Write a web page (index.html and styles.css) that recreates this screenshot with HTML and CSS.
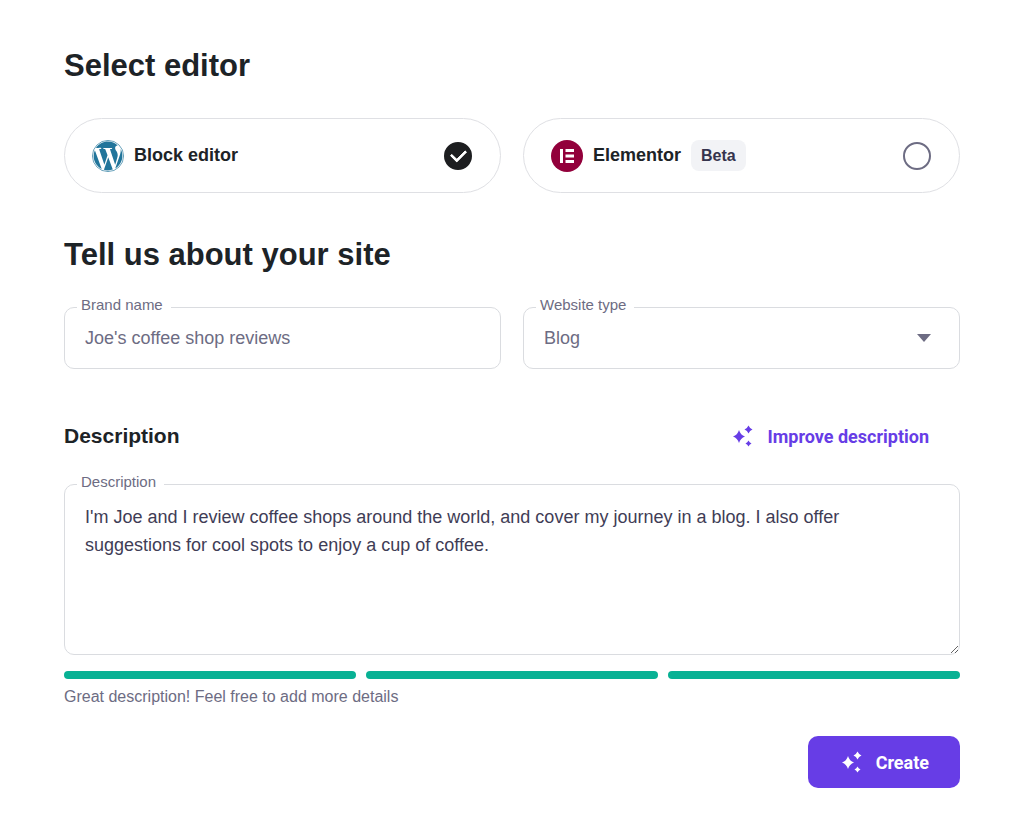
FILE: index.html
```
<!DOCTYPE html>
<html lang="en">
<head>
  <meta charset="UTF-8">
  <meta name="viewport" content="width=device-width, initial-scale=1.0">
  <title>Create your site</title>
  <link rel="stylesheet" href="styles.css">
</head>
<body>
  <form class="site-form">
    <h1 class="title">Select editor</h1>
    <div class="row editors">
      <label class="editor-card" for="editor-block">
        <svg class="editor-logo" viewBox="0 0 24 24" aria-hidden="true">
          <circle cx="12" cy="12" r="11.700" fill="#fff" stroke="#21759b" stroke-width=".5"/>
          <path fill="#21759b" d="M21.469 6.825c.84 1.537 1.318 3.3 1.318 5.175 0 3.979-2.156 7.456-5.363 9.325l3.295-9.527c.615-1.54.82-2.771.82-3.864 0-.405-.026-.78-.07-1.11m-7.981.105c.647-.03 1.232-.105 1.232-.105.582-.075.514-.93-.067-.899 0 0-1.755.135-2.88.135-1.064 0-2.85-.15-2.85-.15-.585-.03-.661.855-.075.885 0 0 .54.061 1.125.09l1.68 4.605-2.37 7.08L5.354 6.9c.649-.03 1.234-.1 1.234-.1.585-.075.516-.93-.065-.896 0 0-1.746.138-2.874.138-.2 0-.438-.008-.69-.015C4.911 3.15 8.235 1.215 12 1.215c2.809 0 5.365 1.072 7.286 2.833-.046-.003-.091-.009-.141-.009-1.06 0-1.812.923-1.812 1.914 0 .89.513 1.643 1.06 2.531.411.72.89 1.643.89 2.977 0 .915-.354 1.994-.821 3.479l-1.075 3.585-3.9-11.61.001.014zM12 22.784c-1.059 0-2.081-.153-3.048-.437l3.237-9.406 3.315 9.087c.024.053.05.101.078.149-1.12.393-2.325.607-3.582.607M1.211 12c0-1.564.336-3.05.935-4.39L7.29 21.709C3.694 19.96 1.212 16.271 1.211 12"/>
        </svg>
        <span class="editor-name">Block editor</span>
        <input class="editor-radio" type="radio" id="editor-block" name="editor" value="block" checked>
      </label>
      <label class="editor-card" for="editor-elementor">
        <svg class="editor-logo" viewBox="0 0 32 32" aria-hidden="true">
          <circle cx="16" cy="16" r="16" fill="#92003b"/>
          <path fill="#fff" d="M9 9h3v14H9zM14.500 9H23v3h-8.500zM14.500 14.500H23v3h-8.500zM14.500 20H23v3h-8.500z"/>
        </svg>
        <span class="editor-name">Elementor</span>
        <span class="badge">Beta</span>
        <input class="editor-radio" type="radio" id="editor-elementor" name="editor" value="elementor">
      </label>
    </div>

    <h2 class="title">Tell us about your site</h2>
    <div class="row">
      <div class="field">
        <label for="brand">Brand name</label>
        <input type="text" id="brand" name="brand" value="Joe's coffee shop reviews">
      </div>
      <div class="field">
        <label for="type">Website type</label>
        <select id="type" name="type">
          <option>Blog</option>
        </select>
        <svg class="arrow" viewBox="0 0 16 8" aria-hidden="true"><path d="M1 0h14L8 8z"/></svg>
      </div>
    </div>

    <div class="description-header">
      <h3>Description</h3>
      <button type="button" class="btn-link">
        <svg class="sparkles" viewBox="0 0 20 22" aria-hidden="true">
          <path d="M6 5Q7.500 10 12 11.500Q7.500 13 6 18Q4.500 13 0 11.500Q4.500 10 6 5zM15.500 0.500Q16.700 3.300 19.500 4.500Q16.700 5.700 15.500 8.500Q14.300 5.700 11.500 4.500Q14.300 3.300 15.500 0.500zM15.500 15.500Q16.400 17.600 18.500 18.500Q16.400 19.400 15.500 21.500Q14.600 19.400 12.500 18.500Q14.600 17.600 15.500 15.500z"/>
        </svg>
        Improve description
      </button>
    </div>
    <div class="field">
      <label for="description">Description</label>
      <textarea id="description" name="description" spellcheck="false">I'm Joe and I review coffee shops around the world, and cover my journey in a blog. I also offer suggestions for cool spots to enjoy a cup of coffee.</textarea>
    </div>
    <div class="strength">
      <span></span>
      <span></span>
      <span></span>
    </div>
    <p class="hint">Great description! Feel free to add more details</p>

    <div class="actions">
      <button type="submit" class="btn-primary">
        <svg class="sparkles" viewBox="0 0 20 22" aria-hidden="true">
          <path d="M6 5Q7.500 10 12 11.500Q7.500 13 6 18Q4.500 13 0 11.500Q4.500 10 6 5zM15.500 0.500Q16.700 3.300 19.500 4.500Q16.700 5.700 15.500 8.500Q14.300 5.700 11.500 4.500Q14.300 3.300 15.500 0.500zM15.500 15.500Q16.400 17.600 18.500 18.500Q16.400 19.400 15.500 21.500Q14.600 19.400 12.500 18.500Q14.600 17.600 15.500 15.500z"/>
        </svg>
        Create
      </button>
    </div>
  </form>
</body>
</html>
```
FILE: styles.css
```
* {
  box-sizing: border-box;
}

body {
  margin: 0;
  background: #fff;
  color: #1d2327;
  font-family: "Liberation Sans", Arial, sans-serif;
}

.site-form {
  padding: 46px 64px 38px;
}

.title {
  margin: 0 0 32px;
  font-size: 31px;
  line-height: 40px;
}

.row {
  display: grid;
  grid-template-columns: 1fr 1fr;
  gap: 22px;
}

.editors {
  margin-bottom: 42px;
}

/* Editor cards */
.editor-card {
  display: flex;
  align-items: center;
  height: 75px;
  padding: 0 28px 0 27px;
  border: 1px solid #dfe0e4;
  border-radius: 38px;
  cursor: pointer;
}

.editor-logo {
  width: 32px;
  height: 32px;
  margin-right: 10px;
}

.editor-name {
  font-size: 18px;
  font-weight: 700;
}

.badge {
  margin-left: 10px;
  padding: 0 10px;
  border-radius: 8px;
  background: #f2f3f6;
  color: #36344d;
  font-size: 16px;
  font-weight: 700;
  line-height: 31px;
}

.editor-radio {
  appearance: none;
  display: grid;
  place-items: center;
  width: 28px;
  height: 28px;
  margin: 0 0 0 auto;
  border: 2px solid #6d6c83;
  border-radius: 50%;
}

.editor-radio:checked {
  border-color: #1d1e20;
  background: #1d1e20;
}

.editor-radio:checked::before {
  content: "";
  width: 12px;
  height: 7px;
  margin-bottom: 4px;
  border-left: 3px solid #fff;
  border-bottom: 3px solid #fff;
  border-radius: 1px;
  transform: rotate(-45deg);
}

/* Outlined fields */
.field {
  position: relative;
}

.field label {
  position: absolute;
  top: -12px;
  left: 13px;
  padding: 0 8px 0 4px;
  background: #fff;
  color: #6d6c83;
  font-size: 15px;
  line-height: 20px;
}

.field input,
.field select,
.field textarea {
  display: block;
  width: 100%;
  height: 62px;
  padding: 0 20px;
  border: 1px solid #dadce0;
  border-radius: 10px;
  background: #fff;
  color: #6d6c83;
  font-family: inherit;
  font-size: 18px;
}

.field select {
  appearance: none;
}

.field textarea {
  height: 171px;
  padding: 18px 20px;
  color: #3f3d56;
  line-height: 28px;
  resize: vertical;
}

.arrow {
  position: absolute;
  top: 27px;
  right: 28px;
  width: 16px;
  height: 8px;
  fill: #6d6c83;
  pointer-events: none;
}

.description-header {
  display: flex;
  align-items: center;
  justify-content: space-between;
  height: 40px;
  margin: 47px 0 28px;
  padding-right: 31px;
}

.description-header h3 {
  margin: 0;
  font-size: 21px;
}

.strength {
  display: grid;
  grid-template-columns: repeat(3, 1fr);
  gap: 10px;
  margin-top: 16px;
}

.strength span {
  height: 8px;
  border-radius: 4px;
  background: #08b194;
}

.hint {
  margin: 8px 0 0;
  color: #6d6c83;
  font-size: 16px;
  line-height: 20px;
}

/* Buttons */
.btn-link,
.btn-primary {
  display: flex;
  align-items: center;
  gap: 14px;
  border: none;
  font-family: Roboto, sans-serif;
  font-size: 18px;
  font-weight: 700;
  cursor: pointer;
}

.btn-link {
  padding: 0;
  background: none;
  color: #673de6;
}

.btn-primary {
  height: 52px;
  padding: 0 31px 0 34px;
  border-radius: 10px;
  background: #673de6;
  color: #fff;
}

.sparkles {
  width: 20px;
  height: 22px;
  fill: currentColor;
}

.actions {
  display: flex;
  justify-content: flex-end;
  margin-top: 29px;
}
```
